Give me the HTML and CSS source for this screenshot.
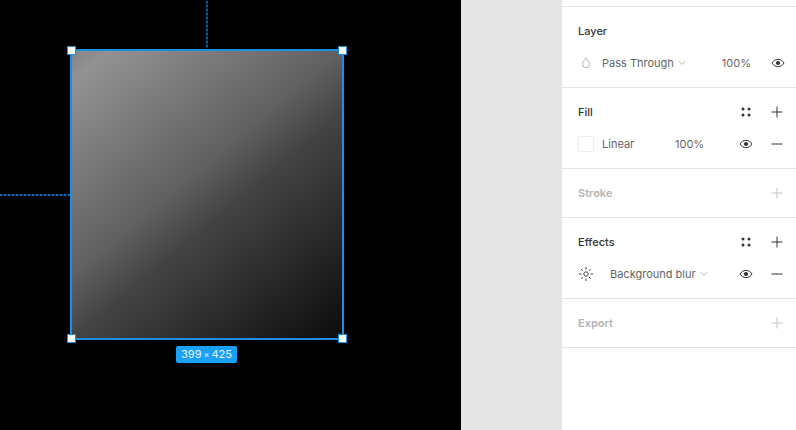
FILE: index.html
```html
<!DOCTYPE html>
<html lang="en">
<head>
<meta charset="utf-8">
<title>Properties</title>
<link rel="stylesheet" href="styles.css">
</head>
<body>
<div class="app">
  <main class="canvas">
    <div class="guide guide-v"></div>
    <div class="guide guide-h"></div>
    <div class="frame">
      <span class="handle tl"></span><span class="handle tr"></span>
      <span class="handle bl"></span><span class="handle br"></span>
    </div>
    <div class="size">399<span class="times">×</span>425</div>
  </main>
  <div class="gutter"></div>
  <aside class="panel">
    <div class="top"></div>
    <section class="sec">
      <div class="head"><span class="title">Layer</span></div>
      <div class="row">
        <svg class="ic16" width="16" height="16" viewBox="0 0 16 16"><path d="M8 3C6.800 5 4.500 6.800 4.500 9.300a3.500 3.500 0 0 0 7 0C11.500 6.800 9.200 5 8 3Z" fill="none" stroke="#b3b3b3"/></svg>
        <span class="txt blend">Pass Through</span>
        <svg class="chev" width="8" height="6" viewBox="0 0 8 6"><path d="M.8 1.200 4 4.400l3.200-3.200" fill="none" stroke="#b3b3b3"/></svg>
        <span class="txt pct-layer">100%</span>
        <svg class="eye eye-layer" width="16" height="16" viewBox="0 0 16 16"><path d="M2 8c1.500-2.400 3.500-3.600 6-3.600s4.500 1.200 6 3.600c-1.500 2.400-3.500 3.600-6 3.600S3.500 10.400 2 8Z" fill="none" stroke="#333"/><circle cx="8" cy="8" r="2.100" fill="#333"/></svg>
      </div>
    </section>
    <section class="sec">
      <div class="head">
        <span class="title">Fill</span>
        <svg class="dots" width="10" height="10" viewBox="0 0 10 10"><circle cx="2" cy="2" r="1.500"/><circle cx="8" cy="2" r="1.500"/><circle cx="2" cy="8" r="1.500"/><circle cx="8" cy="8" r="1.500"/></svg>
        <svg class="plus" width="12" height="12" viewBox="0 0 12 12"><path d="M6 .5v11M.5 6h11" stroke="#333" fill="none"/></svg>
      </div>
      <div class="row">
        <span class="swatch"></span>
        <span class="txt fillname">Linear</span>
        <span class="txt">100%</span>
        <svg class="eye eye-auto" width="16" height="16" viewBox="0 0 16 16"><path d="M2 8c1.500-2.400 3.500-3.600 6-3.600s4.500 1.200 6 3.600c-1.500 2.400-3.500 3.600-6 3.600S3.500 10.400 2 8Z" fill="none" stroke="#333"/><circle cx="8" cy="8" r="2.100" fill="#333"/></svg>
        <svg class="minus" width="12" height="2" viewBox="0 0 12 2"><path d="M.5 1h11" stroke="#333"/></svg>
      </div>
    </section>
    <section class="sec short">
      <div class="head muted">
        <span class="title">Stroke</span>
        <svg class="plus" width="12" height="12" viewBox="0 0 12 12"><path d="M6 .5v11M.5 6h11" stroke="#c4c4c4" fill="none"/></svg>
      </div>
    </section>
    <section class="sec">
      <div class="head">
        <span class="title">Effects</span>
        <svg class="dots" width="10" height="10" viewBox="0 0 10 10"><circle cx="2" cy="2" r="1.500"/><circle cx="8" cy="2" r="1.500"/><circle cx="2" cy="8" r="1.500"/><circle cx="8" cy="8" r="1.500"/></svg>
        <svg class="plus" width="12" height="12" viewBox="0 0 12 12"><path d="M6 .5v11M.5 6h11" stroke="#333" fill="none"/></svg>
      </div>
      <div class="row">
        <svg class="ic16" width="16" height="16" viewBox="0 0 16 16"><circle cx="8" cy="8" r="2.200" fill="none" stroke="#444"/><path d="M8 1v2.500M8 12.500V15M1 8h2.500M12.500 8H15M3.200 3.200l1.600 1.600M11.200 11.200l1.600 1.600M3.200 12.800l1.600-1.600M11.200 4.800l1.600-1.600" stroke="#444" fill="none"/></svg>
        <span class="txt effect">Background blur</span>
        <svg class="chev" width="8" height="6" viewBox="0 0 8 6"><path d="M.8 1.200 4 4.400l3.200-3.200" fill="none" stroke="#b3b3b3"/></svg>
        <svg class="eye eye-auto" width="16" height="16" viewBox="0 0 16 16"><path d="M2 8c1.500-2.400 3.500-3.600 6-3.600s4.500 1.200 6 3.600c-1.500 2.400-3.500 3.600-6 3.600S3.500 10.400 2 8Z" fill="none" stroke="#333"/><circle cx="8" cy="8" r="2.100" fill="#333"/></svg>
        <svg class="minus" width="12" height="2" viewBox="0 0 12 2"><path d="M.5 1h11" stroke="#333"/></svg>
      </div>
    </section>
    <section class="sec short">
      <div class="head muted">
        <span class="title">Export</span>
        <svg class="plus" width="12" height="12" viewBox="0 0 12 12"><path d="M6 .5v11M.5 6h11" stroke="#c4c4c4" fill="none"/></svg>
      </div>
    </section>
  </aside>
</div>
</body>
</html>
```

FILE: styles.css
```css
* { box-sizing: border-box; }
html, body { margin: 0; height: 100%; overflow: hidden; }
body { font-family: Inter, "Liberation Sans", sans-serif; font-size: 11px; background: #e5e5e5; }
.app { display: flex; width: 796px; height: 430px; }

.canvas { position: relative; width: 461px; height: 430px; background: #000; overflow: hidden; flex: none; }
.gutter { width: 101px; flex: none; background: #e5e5e5; }
.guide { position: absolute; }
.guide-v { left: 206px; top: 1px; width: 2px; height: 47px; background: repeating-linear-gradient(to bottom, #0b5f9c 0 2px, #00263d 2px 4px); }
.guide-h { left: 0; top: 194px; width: 70px; height: 2px; background: repeating-linear-gradient(to right, #0f6cb0 0 2px, #00263d 2px 4px); }
.frame {
  position: absolute; left: 70px; top: 49px; width: 274px; height: 291px;
  border: 2px solid #1a8fe3;
  background: linear-gradient(140deg, #858585 0%, #929292 6%, #606060 44%, #444444 56%, #0c0c0c 100%);
}
.handle { position: absolute; width: 9px; height: 9px; background: #fff; border: 1.5px solid #1a8fe3; }
.tl { left: -5px; top: -5px; } .tr { right: -5px; top: -5px; }
.bl { left: -5px; bottom: -5px; } .br { right: -5px; bottom: -5px; }
.size {
  position: absolute; left: 176px; top: 346px; width: 61px; height: 17px; line-height: 17px;
  border-radius: 2px; background: #18a0fb; color: #e8f5ff; font-size: 11px; text-align: center; white-space: nowrap;
}
.times { font-size: 9px; margin: 0 2px; }

.panel { width: 234px; flex: none; height: 430px; background: #fff; color: #333; }
.top { height: 7px; border-bottom: 1px solid #e5e5e5; }
.sec { height: 81px; border-bottom: 1px solid #e5e5e5; padding: 0 13px 0 16px; }
.sec.short { height: 49px; }
.head { height: 48px; display: flex; align-items: center; }
.title { font-weight: 500; color: #333; flex: 1; }
.muted .title { color: #b3b3b3; font-weight: 600; }
.row { height: 16px; display: flex; align-items: center; }
.txt { color: #666; white-space: nowrap; }
.dots { margin-right: 20px; fill: #333; flex: none; }
.plus { flex: none; }
.minus { flex: none; margin-left: 17px; }
.ic16 { flex: none; }
.swatch { width: 16px; height: 16px; border: 1px solid #eee; background: #fff; flex: none; }
.blend { margin-left: 8px; }
.fillname { margin-left: 8px; width: 73px; }
.effect { margin-left: 16px; }
.chev { margin-left: 4px; flex: none; }
.pct-layer { margin-left: auto; }
.eye { flex: none; }
.eye-layer { margin-left: 19px; margin-right: -3px; }
.eye-auto { margin-left: auto; }
```
